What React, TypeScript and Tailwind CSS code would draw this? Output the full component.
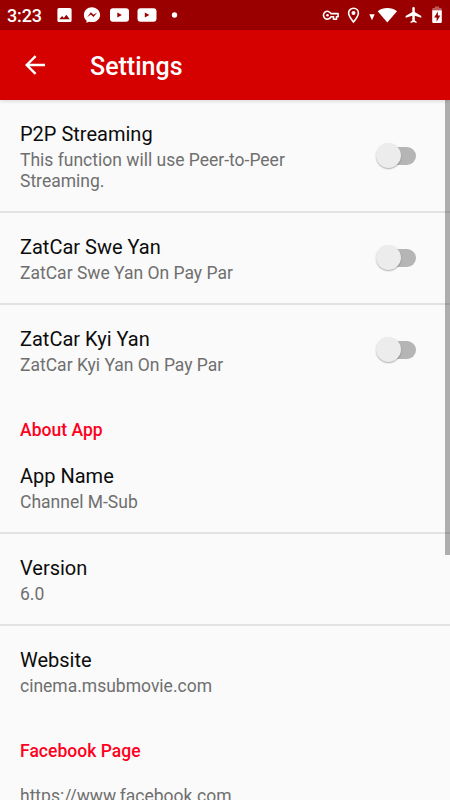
import type { ReactNode } from 'react'

interface PreferenceProps {
  title?: string
  summary: string
  divider?: boolean
  toggle?: boolean
}

function Toggle() {
  return (
    <button role="switch" aria-checked={false} className="relative mb-[2px] h-[26px] w-10 shrink-0">
      <span className="absolute top-[4px] left-[5px] h-[18px] w-[35px] rounded-full bg-[#b5b5b5]" />
      <span className="absolute top-0 left-0 h-[25px] w-[25px] rounded-full bg-[#ececec] shadow-[0_1px_1.5px_rgba(0,0,0,0.3)]" />
    </button>
  )
}

function Preference({ title, summary, divider, toggle }: PreferenceProps) {
  return (
    <div
      className={`flex items-center justify-between border-b-2 pt-[21px] pr-[34px] pb-[19px] pl-5 ${
        divider ? 'border-[#e2e2e2]' : 'border-transparent'
      }`}
    >
      <div className="w-[300px]">
        {title && <h3 className="mb-[3px] text-[20px] leading-[26px] text-[#0c0c0c]">{title}</h3>}
        <p className={`text-[17.5px] leading-[21px] text-[#6f6f6f] ${title ? '' : 'pt-[2px]'}`}>{summary}</p>
      </div>
      {toggle && <Toggle />}
    </div>
  )
}

function SectionTitle({ children }: { children: ReactNode }) {
  return (
    <h2 className="flex h-[45px] items-center pt-[22px] pl-5 text-[17.5px] leading-[21px] font-medium tracking-[0.03px] text-[#ff0020]">
      {children}
    </h2>
  )
}

function StatusBar() {
  return (
    <div className="h-[30px] bg-[#9b0000] text-white">
      <svg width="450" height="30" viewBox="0 0 450 30" fill="currentColor">
        <text x="7" y="22" fontSize="18" fontWeight="500" textLength="35">3:23</text>
        {/* Image */}
        <path fillRule="evenodd" d="M59 8h11a1.6 1.6 0 0 1 1.6 1.6v10.8A1.6 1.6 0 0 1 70 22H59a1.6 1.6 0 0 1-1.6-1.6V9.600A1.6 1.6 0 0 1 59 8Zm.4 11.200h10.300l-3.300-4.400-2.500 3.200-1.800-2.100Z" />
        {/* Messenger */}
        <path fillRule="evenodd" d="M92 7.200c-4.600 0-8.100 3.300-8.100 7.700 0 2.300 1 4.300 2.600 5.700v2.200l2.500-1.100c.9.300 1.900.4 3 .4 4.600 0 8.100-3.200 8.100-7.200S96.600 7.200 92 7.200Zm-4.900 10 3.700-4.900 2.700 2.500 3.700-2.200-3.700 4.500-2.700-2.500Z" />
        {/* Youtube */}
        <path fillRule="evenodd" d="M113 8.200h13q3 0 3 3v7.600q0 3-3 3h-13q-3 0-3-3v-7.600q0-3 3-3Zm4.300 4.200v5.200l4.600-2.600Z" />
        <path fillRule="evenodd" d="M140.500 8.200h13q3 0 3 3v7.600q0 3-3 3h-13q-3 0-3-3v-7.600q0-3 3-3Zm4.300 4.200v5.200l4.600-2.600Z" />
        <circle cx="174.500" cy="15" r="2.700" />
        {/* VPN key */}
        <path d="M330.900 13.600h7.200v3.200h-1.600v2.500h-3v-2.500h-2.600a3.900 3.900 0 1 1 0-3.200Z" fill="none" stroke="currentColor" strokeWidth="1.600" strokeLinejoin="round" />
        <circle cx="327.500" cy="15.200" r="1.300" />
        {/* Location */}
        <path d="M353.500 22c-2.800-3.300-4.900-6.200-4.900-8.900a4.900 4.900 0 0 1 9.800 0c0 2.700-2.100 5.600-4.900 8.900Z" fill="none" stroke="currentColor" strokeWidth="1.600" />
        <circle cx="353.500" cy="13.100" r="2" />
        {/* Wifi */}
        <path d="M369.300 14.300h5.400l-2.700 6Z" />
        <path d="M377.700 11.200C380.500 9 383.700 7.900 387.300 7.900s6.900 1.100 9.700 3.300L387.300 22.400Z" />
        {/* Airplane mode */}
        <path d="M421.300 17.800v-1.700l-6.500-4.100V8.400c0-1.900-2.500-1.900-2.500 0V12l-6.700 4.100v1.700l6.700-2v4.600l-1.800 1.300v1.200l3-.9 3.100.9v-1.200l-1.800-1.300v-4.600Z" />
        {/* Battery */}
        <path d="M432.200 10.200V9q0-1 1-1h1.700V6.600h4.200V8h1.700q1 0 1 1v1.200Z" opacity=".35" />
        <path fillRule="evenodd" d="M432.200 10.200h9.600v11.500q0 1.200-1.200 1.200h-7.200q-1.200 0-1.200-1.200Zm5.700 1.200-3.800 6h2.500v4.300l3.700-6.100h-2.400Z" />
      </svg>
    </div>
  )
}

export default function App() {
  return (
    <div className="relative h-[800px] w-[450px] overflow-hidden bg-[#fafafa] font-[Roboto,sans-serif]">
      <StatusBar />

      {/* Toolbar */}
      <header className="relative flex h-[70px] items-center bg-[#d50000] pl-[25px] text-white shadow-[0_1px_4px_rgba(0,0,0,0.15)]">
        <button aria-label="Back">
          <svg width="20" height="20" viewBox="0 0 20 20" fill="none" stroke="currentColor" strokeWidth="2.400">
            <path d="M20 10H2M10.600 1.100 1.700 10l8.900 8.900" />
          </svg>
        </button>
        <h1 className="ml-[45px] pt-[4px] text-[25px] leading-[30px] font-medium">Settings</h1>
      </header>

      <main>
        <Preference title="P2P Streaming" summary="This function will use Peer-to-Peer Streaming." divider toggle />
        <Preference title="ZatCar Swe Yan" summary="ZatCar Swe Yan On Pay Par" divider toggle />
        <Preference title="ZatCar Kyi Yan" summary="ZatCar Kyi Yan On Pay Par" toggle />

        <SectionTitle>About App</SectionTitle>
        <Preference title="App Name" summary="Channel M-Sub" divider />
        <Preference title="Version" summary="6.0" divider />
        <Preference title="Website" summary="cinema.msubmovie.com" />

        <SectionTitle>Facebook Page</SectionTitle>
        <Preference summary="https://www.facebook.com" />
      </main>

      {/* Scrollbar */}
      <div className="absolute top-[100px] right-0 h-[455px] w-[5px] bg-black/30" />
    </div>
  )
}
